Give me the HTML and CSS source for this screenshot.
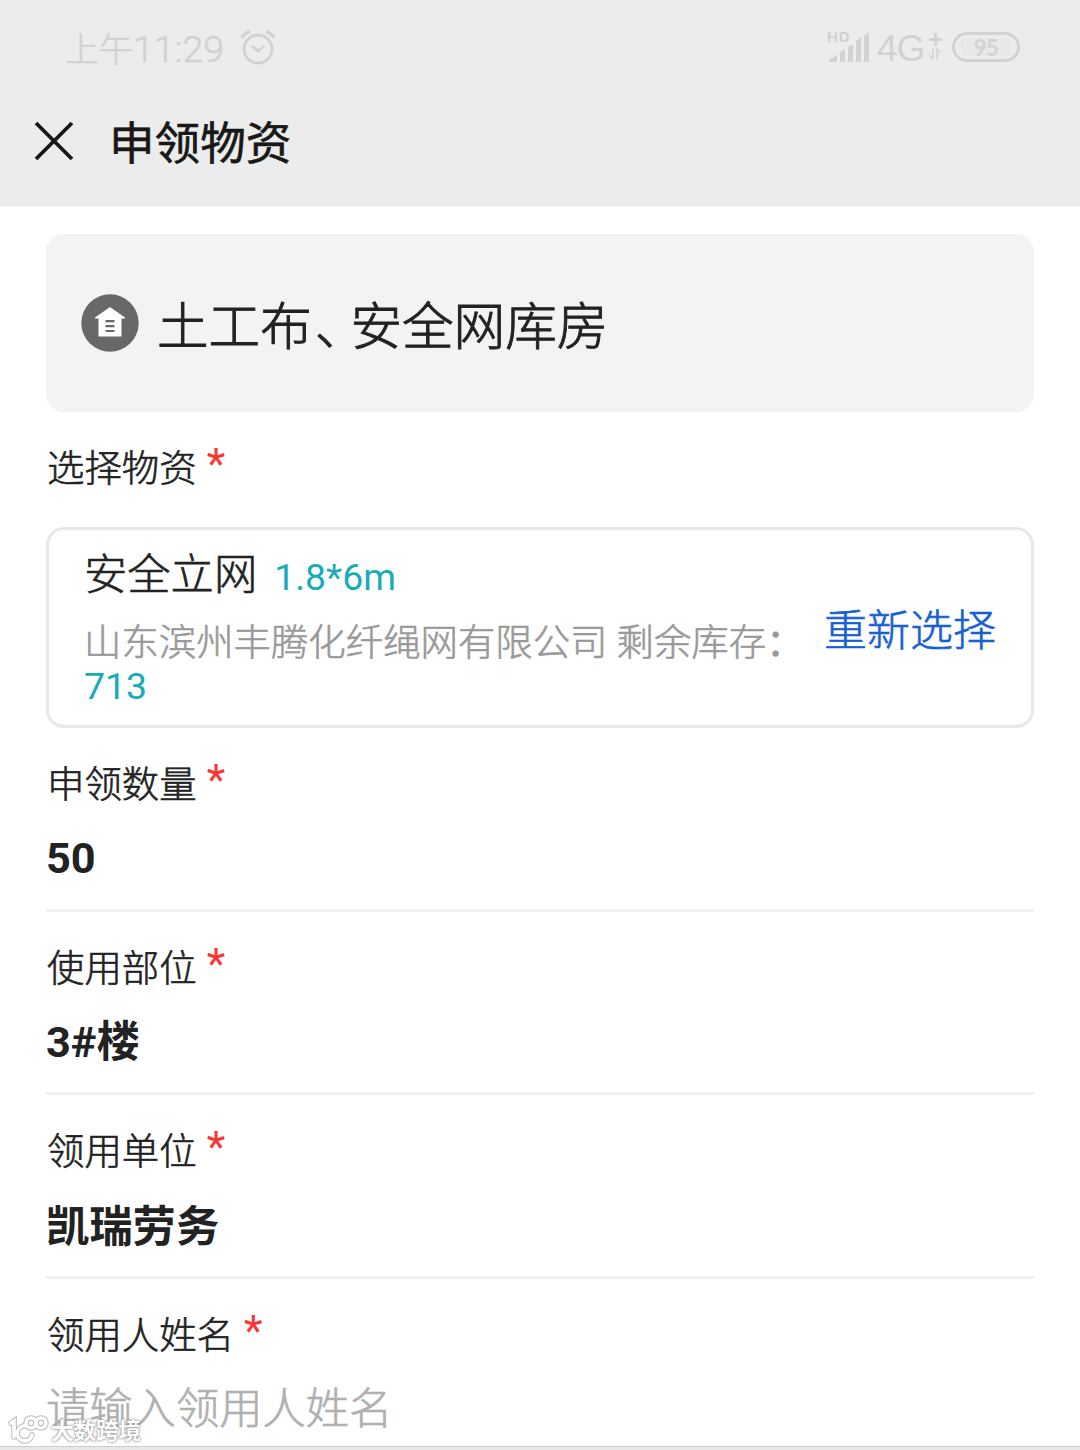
FILE: index.html
```html
<!DOCTYPE html>
<html lang="zh-CN">
<head>
<meta charset="utf-8">
<title>申领物资</title>
<link rel="stylesheet" href="styles.css">
</head>
<body>
<div class="screen">
  <header class="top">
    <div class="status">
      <span class="time"><span class="ampm">上午</span>11:29</span>
      <svg class="alarm" width="36" height="36" viewBox="0 0 36 36" fill="none" stroke="#d2d2d2" stroke-width="2.8">
        <circle cx="18" cy="19" r="14"/><path d="M12 16l6 5 6-5"/><path d="M1.500 7.500Q5 3 10 1.500M34.500 7.500Q31 3 26 1.500" stroke-width="3.200"/>
      </svg>
      <span class="signal">
        <span class="hd">HD</span>
        <svg width="44" height="34" viewBox="0 0 44 34" fill="#d2d2d2">
          <path d="M2 31v-2l8-5v7zM13 31V21l5-3v13zM21 31V16l5-3v18zM29 31V10l5-3.500V31zM37 31V5l5-4v30z"/>
        </svg>
      </span>
      <span class="net">4G</span>
      <svg class="plus" width="16" height="34" viewBox="0 0 16 34" fill="none" stroke="#d2d2d2">
        <path d="M1 8.500h13M7.500 2v13" stroke-width="2.800"/><path d="M5 17v11l-4-4M9 29V18l4 4" stroke-width="1.400"/>
      </svg>
      <span class="battery"><span class="charge">95</span></span>
    </div>
    <div class="nav">
      <svg class="close" width="40" height="40" viewBox="0 0 40 40" stroke="#181818" stroke-width="3.800"><path d="M2 2l36 36M38 2L2 38"/></svg>
      <h1 class="title">申领物资</h1>
    </div>
  </header>
  <main class="content">
    <section class="store">
      <svg class="store-icon" width="58" height="58" viewBox="0 0 58 58">
        <circle cx="29" cy="29" r="28.700" fill="#686868"/>
        <path d="M29 13L44 23.500V24.500H40.500V42.500H17.500V24.500H14V23.500z" fill="#fff"/>
        <path d="M24.500 27.200h9M24.500 32.200h9M24.500 37h9" stroke="#686868" stroke-width="2.200"/>
      </svg>
      <span class="store-name">土工布<span class="comma">、</span>安全网库房</span>
    </section>
    <div class="label first">选择物资 <b class="req">*</b></div>
    <section class="item">
      <div class="info">
        <div class="item-head"><span class="item-name">安全立网</span><span class="spec">1.8*6m</span></div>
        <div class="detail">山东滨州丰腾化纤绳网有限公司 剩余库存<span class="colon">：</span><span class="count">713</span></div>
      </div>
      <a class="again">重新选择</a>
    </section>
    <section class="field"><div class="label">申领数量 <b class="req">*</b></div><div class="value">50</div></section>
    <section class="field"><div class="label">使用部位 <b class="req">*</b></div><div class="value">3#楼</div></section>
    <section class="field"><div class="label">领用单位 <b class="req">*</b></div><div class="value han">凯瑞劳务</div></section>
    <section class="field last"><div class="label">领用人姓名 <b class="req">*</b></div><div class="value hint">请输入领用人姓名</div></section>
  </main>
  <footer class="bottom"></footer>
  <div class="mark">
    <svg width="42" height="30" viewBox="0 0 42 30" fill="none" stroke-linecap="round">
      <g stroke="#b8b8b8" stroke-width="5.500"><path d="M4 9l3-2v16M19 12A7.500 7.500 0 1 0 25 21"/><circle cx="24" cy="9" r="5"/><circle cx="34" cy="9" r="5"/></g>
      <g stroke="#fff" stroke-width="3.600"><path d="M4 9l3-2v16M19 12A7.500 7.500 0 1 0 25 21"/><circle cx="24" cy="9" r="5"/><circle cx="34" cy="9" r="5"/></g>
    </svg>
    <span class="mark-text">大数跨境</span>
  </div>
</div>
</body>
</html>
```
FILE: styles.css
```css
* { box-sizing: border-box; }
body { margin: 0; background: #fff; color: #222; font-family: Roboto, "Noto Sans CJK SC", sans-serif; font-weight: 300; -webkit-text-stroke: .6px currentColor; }
.screen { position: relative; width: 1080px; height: 1450px; display: flex; flex-direction: column; overflow: hidden; white-space: nowrap; }
.top { height: 206px; flex: none; background: #ececec; border-bottom: 1px solid #e6e6e6; }
.status { height: 96px; padding: 0 60px 0 65px; display: flex; align-items: center; color: #d2d2d2; }
.time { width: 160px; font-size: 37.500px; line-height: 50px; padding-top: 2px; }
.ampm { font-size: 34px; }
.alarm { margin-left: 15px; }
.signal { position: relative; height: 34px; margin-left: auto; -webkit-text-stroke: 0; }
.signal svg { display: block; }
.hd { position: absolute; left: 0; top: -3px; font: 700 15px/18px "Liberation Sans", sans-serif; letter-spacing: 1px; }
.net { width: 50px; margin-left: 6px; font: 37px/50px "Liberation Sans", sans-serif; padding-top: 2px; letter-spacing: -1px; -webkit-text-stroke: 0; }
.plus { margin-left: 1px; }
.battery { width: 68px; height: 30px; margin: -2px 0 0 8px; border: 3px solid #d2d2d2; border-radius: 15px; padding: 3px 6px; -webkit-text-stroke: 0; }
.charge { display: block; height: 18px; border-radius: 4px; background: #e8e8e8; text-align: center; font: 700 22px/19px Lato, sans-serif; letter-spacing: -.5px; }
.nav { height: 92px; padding-left: 34px; display: flex; align-items: center; }
.close { margin-top: -3px; }
.title { margin: 5px 0 0 35px; font-size: 45.600px; line-height: 60px; font-weight: 400; color: #181818; -webkit-text-stroke-width: .6px; }
.content { flex: 1; min-height: 0; padding: 28px 46px 0; overflow: hidden; }
.store { height: 178px; padding-left: 35px; display: flex; align-items: center; background: #f3f3f3; border-radius: 18px; }
.store-name { margin-left: 18px; padding-top: 9px; font-size: 51.600px; line-height: 70px; -webkit-text-stroke-width: .9px; }
.comma { margin: 0 -16px 0 3px; }
.label { padding-left: 1px; font-size: 37.400px; line-height: 50px; }
.req { margin-left: 1px; font-size: 43px; line-height: 0; vertical-align: 4px; font-weight: 400; color: #fa3534; -webkit-text-stroke-width: 0; }
.first { height: 115px; padding-top: 32px; }
.item { height: 201px; padding: 16px 35px 0 35px; border: 3px solid #e8e8e8; border-radius: 18px; display: flex; }
.info { width: 741px; }
.item-head { display: flex; align-items: baseline; line-height: 60px; }
.item-name { font-size: 43.300px; }
.spec { margin-left: 17px; font-size: 37.400px; font-weight: 400; color: #19acb7; -webkit-text-stroke-width: 0; }
.detail { margin-top: 13px; width: 730px; font-size: 37.400px; line-height: 46px; color: #999; white-space: normal; }
.colon { -webkit-text-stroke-width: 1.500px; }
.count { display: block; line-height: 40px; font-weight: 400; color: #19acb7; -webkit-text-stroke-width: 0; }
.again { height: 60px; margin-top: 55px; font-size: 43px; line-height: 60px; color: #1560d4; }
.field { height: 183.500px; padding-top: 32px; border-bottom: 3px solid #f0f0f0; }
.last { border: 0; }
.value { margin-top: 19px; font-size: 43.300px; line-height: 60px; font-weight: 700; -webkit-text-stroke-width: 0; }
.han { margin-top: 21px; }
.hint { font-weight: 300; color: #b0b0b0; -webkit-text-stroke-width: .6px; }
.bottom { height: 4px; flex: none; background: #e6e8ea; border-top: 1px solid #ccc; }
.mark { position: absolute; left: 7px; bottom: 6px; display: flex; align-items: flex-end; -webkit-text-stroke: 0; }
.mark-text { margin-left: 2px; font-size: 22.500px; line-height: 26px; font-weight: 700; color: #fff; text-shadow: 0 0 2px #888, 0 0 3px #999; }
```
